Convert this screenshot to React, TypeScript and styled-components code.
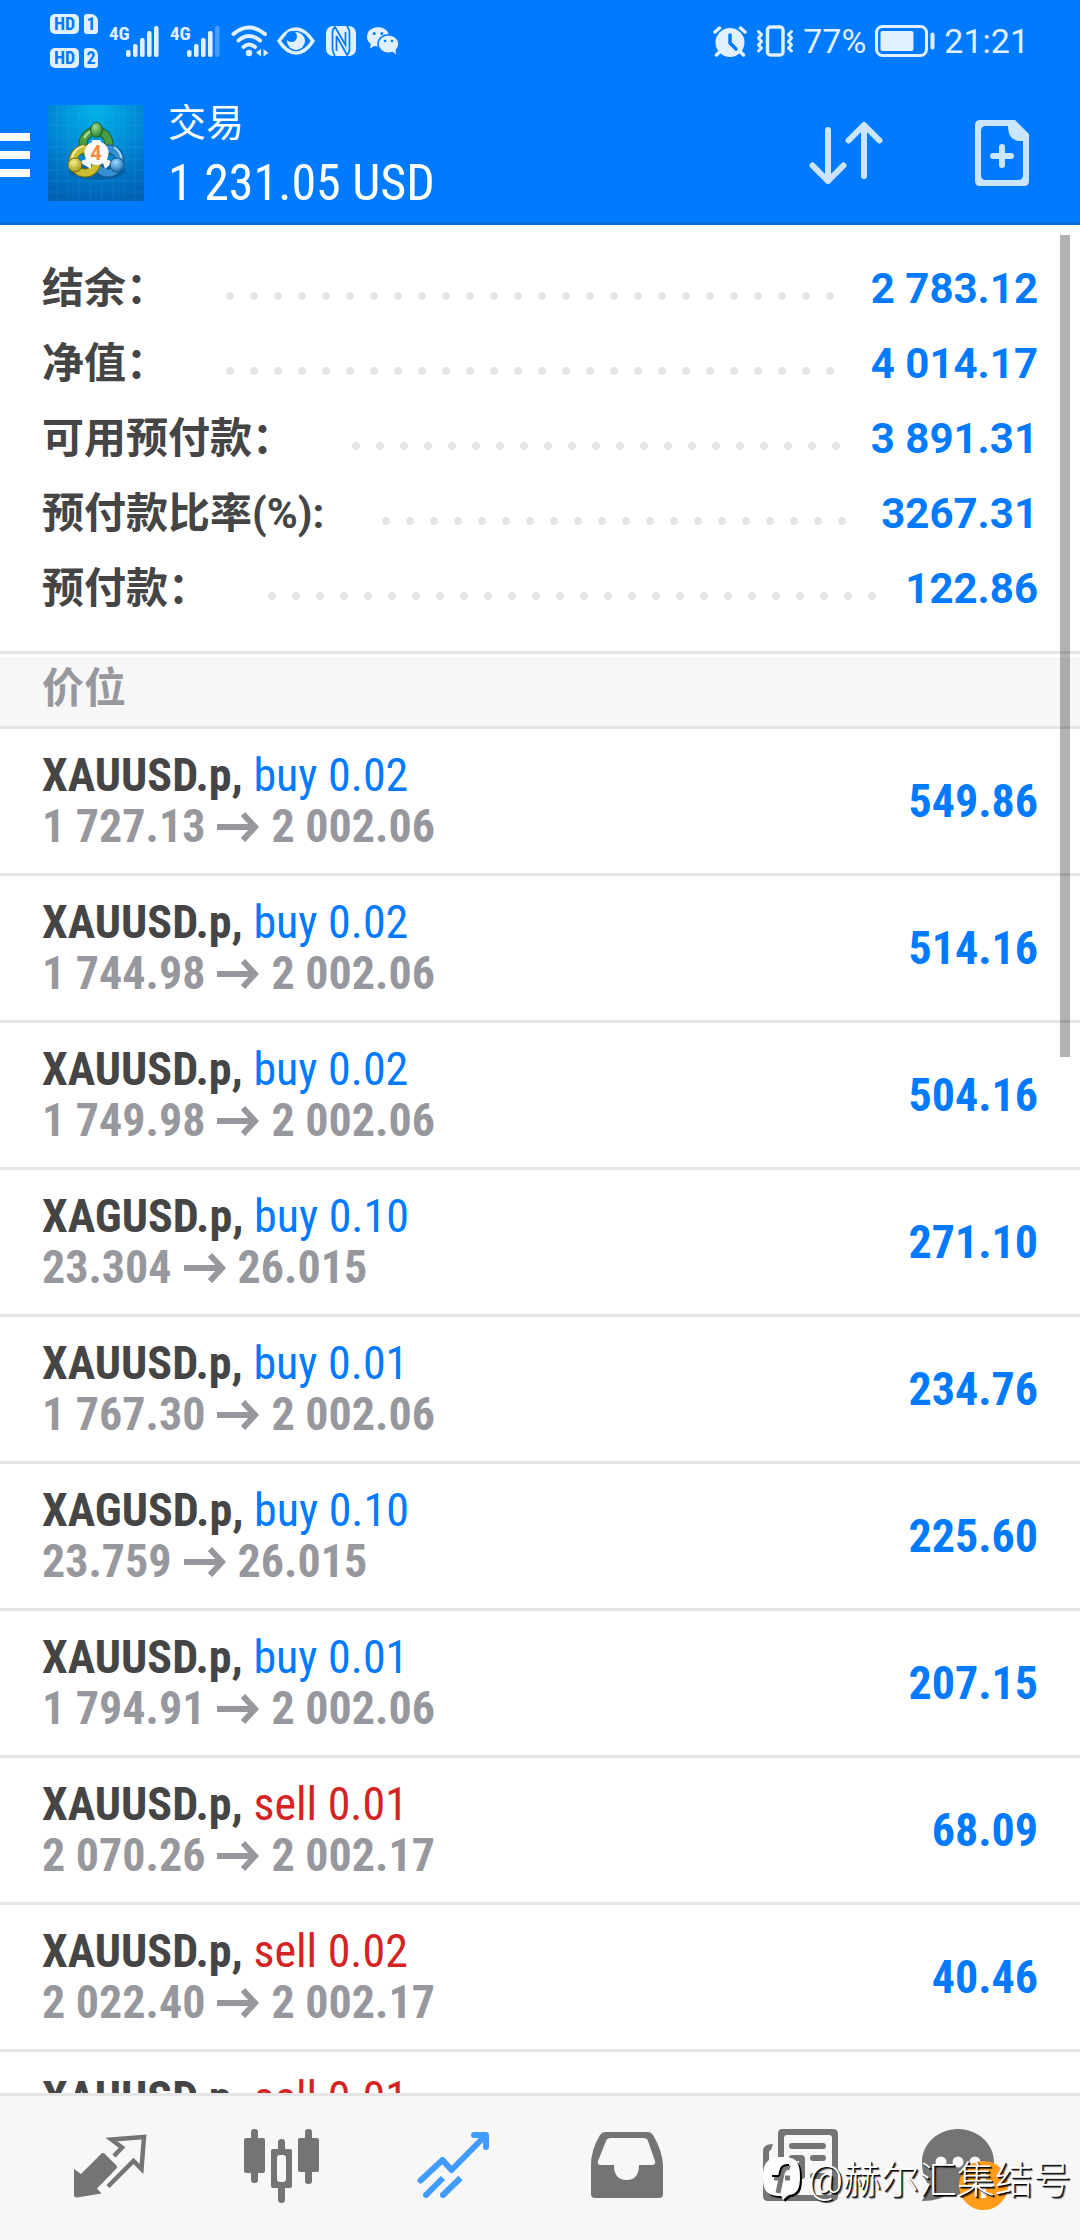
import React from "react";
import styled, { createGlobalStyle } from "styled-components";

const condensed = `"Roboto Condensed", "Liberation Sans Narrow", Roboto, "Noto Sans CJK SC", sans-serif`;
const regular = `Roboto, "Noto Sans CJK SC", sans-serif`;

const blue = "#007aff";
const red = "#d32323";
const ink = "#454545";
const muted = "#97989d";
const rule = "#e5e5e5";
const panel = "#f7f7f7";
const iconGray = "#747474";
const statusTint = "#e0f0ff";

const GlobalStyle = createGlobalStyle`
  * { box-sizing: border-box; }
  body { margin: 0; background: #fff; }
  button { border: 0; padding: 0; background: none; font: inherit; color: inherit; cursor: pointer; }
  svg { display: block; flex: none; }
`;

const Screen = styled.div`
  position: relative;
  display: flex;
  flex-direction: column;
  height: 100vh;
  overflow: hidden;
  font-family: ${condensed};
`;

const Header = styled.header`
  flex: none;
  background: ${blue};
  color: #fff;
  border-bottom: 3px solid #0c6bd3;
`;

const StatusBar = styled.div`
  display: flex;
  align-items: center;
  justify-content: space-between;
  height: 84px;
  padding: 0 51px 2px 50px;
  color: ${statusTint};
`;

const StatusGroup = styled.div<{ $gap: number }>`
  display: flex;
  align-items: center;
  gap: ${(p) => p.$gap}px;
`;

const SimStack = styled.div`
  display: grid;
  grid-template-columns: 29px 14px;
  gap: 14px 5px;
`;

const SimTag = styled.span<{ $card?: boolean }>`
  height: 20px;
  border-radius: ${(p) => (p.$card ? "3px 7px 3px 3px" : "5px")};
  background: ${statusTint};
  color: ${blue};
  font: 700 18px/20px ${condensed};
  text-align: center;
`;

const Signal = styled.div`
  display: flex;
  align-items: flex-start;
`;

const SignalLabel = styled.span`
  width: 17px;
  font: 700 19px/16px ${condensed};
`;

const StatusText = styled.span`
  font: 400 34px/40px ${regular};
`;

const Toolbar = styled.div`
  display: flex;
  align-items: center;
  height: 138px;
  padding-right: 51px;
`;

const MenuButton = styled.button`
  display: flex;
  flex-direction: column;
  gap: 10px;
  width: 30px;
  padding-top: 4px;
  margin-right: 18px;
`;

const MenuBar = styled.span`
  height: 8px;
  background: #fff;
`;

const TitleBlock = styled.div`
  flex: 1;
  margin-left: 24px;
`;

const Title = styled.h1`
  margin: 0;
  font: 400 38px/60px ${regular};
`;

const Profit = styled.p`
  margin: 0;
  font: 400 50px/60px ${condensed};
`;

const ToolButton = styled.button`
  margin-left: 92px;
`;

const Content = styled.main`
  position: relative;
  flex: 1;
  min-height: 0;
  overflow: hidden;
`;

const ScrollThumb = styled.div`
  position: absolute;
  top: 10px;
  right: 10px;
  width: 10px;
  height: 44%;
  background: rgba(0, 0, 0, 0.3);
`;

const Summary = styled.dl`
  margin: 0;
  padding: 26px 42px 25px;
`;

const SummaryRow = styled.div`
  display: flex;
  align-items: center;
  height: 75px;
`;

const SummaryLabel = styled.dt`
  color: ${ink};
  font: 700 42px/60px ${regular};
  white-space: nowrap;
`;

const Leader = styled.span`
  flex: 1;
  height: 8px;
  margin: 14px 24px 0 58px;
  background: radial-gradient(circle at 4px 4px, ${rule} 4px, transparent 4px) 0 0 / 24px 8px repeat-x;
`;

const SummaryValue = styled.dd`
  margin: 0;
  color: ${blue};
  font: 700 42px/60px ${regular};
`;

const SectionTitle = styled.h2`
  margin: 0;
  padding: 0 42px 3px;
  border-top: 3px solid ${rule};
  border-bottom: 3px solid ${rule};
  box-shadow: inset 0 3px #fff;
  background: ${panel};
  color: ${muted};
  font: 700 42px/69px ${regular};
`;

const Positions = styled.ul`
  margin: 0;
  padding: 0;
  list-style: none;
`;

const Position = styled.li`
  display: flex;
  align-items: center;
  justify-content: space-between;
  height: 147px;
  padding: 0 42px;
  border-bottom: 3px solid ${rule};
  font-size: 46px;
  line-height: 51px;
  font-weight: 700;
`;

const Order = styled.div`
  color: ${ink};
`;

const Side = styled.span<{ $side: "buy" | "sell" }>`
  color: ${(p) => (p.$side === "buy" ? blue : red)};
  font-weight: 400;
`;

const Prices = styled.div`
  display: flex;
  align-items: center;
  gap: 12px;
  color: ${muted};
`;

const PositionProfit = styled.span`
  color: ${blue};
`;

const TabBar = styled.nav`
  flex: none;
  display: grid;
  grid-template-columns: repeat(6, 1fr);
  height: 147px;
  padding: 0 24px;
  border-top: 3px solid ${rule};
  background: ${panel};
`;

const Tab = styled.button<{ $active?: boolean }>`
  display: flex;
  align-items: center;
  justify-content: center;
  color: ${(p) => (p.$active ? "#429bff" : iconGray)};
`;

const Watermark = styled.div`
  position: absolute;
  right: 9px;
  bottom: 32px;
  display: flex;
  align-items: center;
  gap: 5px;
  color: #fff;
  font: 300 38px/56px ${regular};
  text-shadow: 1px 1px 0 #000, 2px 2px 1px rgba(0, 0, 0, 0.7);
  pointer-events: none;
`;

function SignalBars({ weak }: { weak?: boolean }) {
  const tops = [24, 18, 12, 5, 0];
  return (
    <svg width="33" height="31" viewBox="0 0 33 31" fill="currentColor">
      {tops.map((top, i) => (
        <rect key={top} x={i * 7} y={top} width="4.6" height={31 - top} rx="2" opacity={weak && i === 4 ? 0.3 : 1} />
      ))}
    </svg>
  );
}

function WifiIcon() {
  return (
    <svg width="38" height="32" viewBox="0 0 38 32" fill="none" stroke="currentColor" strokeWidth="4" strokeLinecap="round">
      <path d="M2.500 9Q18 -4 34 9" />
      <path d="M7.500 15.500Q18 6.500 29 15.500" />
      <path d="M12.500 22Q18 17 24 22" />
      <circle cx="18" cy="28" r="3.200" fill="currentColor" stroke="none" />
      <path d="M30 24v7.500l-5-4zM32.500 31.500v-7.500l5 4z" fill="currentColor" stroke="none" />
    </svg>
  );
}

function EyeIcon() {
  return (
    <svg width="38" height="28" viewBox="0 0 38 28">
      <path d="M2 14Q10 2 19 2T36 14Q28 26 19 26T2 14Z" fill="none" stroke="currentColor" strokeWidth="3.500" strokeLinejoin="round" />
      <circle cx="19" cy="14" r="9" fill="currentColor" />
      <circle cx="14.500" cy="9.500" r="5.500" fill={blue} />
    </svg>
  );
}

function NfcIcon() {
  return (
    <svg width="30" height="30" viewBox="0 0 30 30">
      <rect width="30" height="30" rx="7" fill="currentColor" />
      <path d="M9 30Q6.500 27 6.500 22V7Q6.500 3 9 1L19.500 19V6M10.500 10v15M10.500 10L21 29Q23.500 27 23.500 23V8Q23.500 3 21 0" fill="none" stroke={blue} strokeWidth="1.700" />
    </svg>
  );
}

function WeChatIcon() {
  return (
    <svg width="32" height="28" viewBox="0 0 32 28">
      <path d="M4 16L3 21.500l6-3.500z" fill="currentColor" />
      <ellipse cx="11" cy="9.700" rx="11" ry="9.700" fill="currentColor" />
      <ellipse cx="21.500" cy="17" rx="10.500" ry="9.300" fill="currentColor" stroke={blue} strokeWidth="1.500" />
      <path d="M25 24l4 3.500-.5-5z" fill="currentColor" />
      <circle cx="7.200" cy="6.500" r="1.500" fill={blue} />
      <circle cx="14.800" cy="6.500" r="1.500" fill={blue} />
      <circle cx="18" cy="14" r="1.300" fill={blue} />
      <circle cx="25" cy="14" r="1.300" fill={blue} />
    </svg>
  );
}

function AlarmIcon() {
  return (
    <svg width="34" height="31" viewBox="0 0 34 31" strokeLinecap="round" strokeLinejoin="round" fill="none">
      <circle cx="17" cy="16.500" r="14.500" fill="currentColor" />
      <path d="M2 6l4.500-4M32 6l-4.500-4M6.500 26l-3 3M27.500 26l3 3" stroke="currentColor" strokeWidth="3.500" />
      <path d="M17 9v8l6 6" stroke={blue} strokeWidth="3.500" />
    </svg>
  );
}

function VibrateIcon() {
  return (
    <svg width="38" height="32" viewBox="0 0 38 32" fill="none" stroke="currentColor" strokeLinejoin="round" strokeLinecap="round">
      <rect x="11.500" y="2" width="15.500" height="28" rx="3" strokeWidth="3.500" />
      <path d="M2.500 6.500l3 3-3 3.500 3 3.500-3 3.500 3 3-3 3M35.500 6.500l-3 3 3 3.500-3 3.500 3 3.500-3 3 3 3" strokeWidth="3" />
    </svg>
  );
}

function BatteryIcon() {
  return (
    <svg width="60" height="32" viewBox="0 0 60 32">
      <rect x="1.500" y="1.500" width="50" height="29" rx="6" fill="none" stroke="currentColor" strokeWidth="3" />
      <rect x="5.500" y="6" width="33" height="20" rx="2" fill="currentColor" />
      <rect x="55.500" y="7.500" width="4" height="17" rx="2" fill="currentColor" />
    </svg>
  );
}

function AppLogo() {
  const grid = [9, 20, 31, 42, 54, 65, 76, 87];
  return (
    <svg width="96" height="96" viewBox="0 0 96 96">
      <defs>
        <radialGradient id="logoBack" cx="0.5" cy="0.08" r="0.95">
          <stop offset="0" stopColor="#00b2ea" />
          <stop offset="0.55" stopColor="#0083d2" />
          <stop offset="1" stopColor="#0060b4" />
        </radialGradient>
        <radialGradient id="logoGreen" cx="0.4" cy="0.3" r="0.7">
          <stop offset="0" stopColor="#a5dc8f" />
          <stop offset="1" stopColor="#257f2c" />
        </radialGradient>
        <radialGradient id="logoYellow" cx="0.4" cy="0.3" r="0.7">
          <stop offset="0" stopColor="#f6ef8e" />
          <stop offset="1" stopColor="#a99a17" />
        </radialGradient>
        <radialGradient id="logoBlue" cx="0.4" cy="0.3" r="0.7">
          <stop offset="0" stopColor="#9ed9fa" />
          <stop offset="1" stopColor="#1a72b8" />
        </radialGradient>
      </defs>
      <rect width="96" height="96" fill="url(#logoBack)" />
      {grid.map((at) => (
        <path key={at} d={`M${at} 0V96M0 ${at}H96`} stroke="#5cc8f2" strokeOpacity="0.14" />
      ))}
      <ellipse cx="49" cy="66" rx="29" ry="9" fill="#004a80" opacity="0.4" />
      <circle cx="48" cy="39" r="13" fill="none" stroke="#1c5f2a" strokeWidth="9" />
      <circle cx="48" cy="39" r="13" fill="none" stroke="#4a9c40" strokeWidth="7" />
      <path d="M36 33Q41 25 48 25" fill="none" stroke="#b4e3a4" strokeWidth="2" />
      <circle cx="60" cy="56" r="12" fill="none" stroke="#17548c" strokeWidth="9" />
      <circle cx="60" cy="56" r="12" fill="none" stroke="#3590d2" strokeWidth="7" />
      <path d="M66 42Q73 47 73 53" fill="none" stroke="#a9dcf8" strokeWidth="2" />
      <circle cx="37" cy="56" r="12" fill="none" stroke="#6d6a12" strokeWidth="9" />
      <circle cx="37" cy="56" r="12" fill="none" stroke="#c9bc30" strokeWidth="7" />
      <path d="M24 53Q27 42 36 41" fill="none" stroke="#f5f0a3" strokeWidth="2" />
      <path d="M31 57L43 52V64zM65 57L53 52L57 64zM43 35H53L50 44z" fill="#f4f7ef" />
      <ellipse cx="48.500" cy="25" rx="6" ry="7.500" fill="url(#logoGreen)" stroke="#1c5f2a" />
      <ellipse cx="27" cy="60" rx="7" ry="7" fill="url(#logoYellow)" stroke="#6d6a12" />
      <ellipse cx="69" cy="60" rx="7" ry="7" fill="url(#logoBlue)" stroke="#17548c" />
      <circle cx="48.500" cy="48" r="12" fill="#fbfbfb" />
      <text x="48" y="55" textAnchor="middle" fontFamily="Roboto, sans-serif" fontSize="20" fontWeight="700" fill="#f08a3c">4</text>
    </svg>
  );
}

function SortIcon() {
  return (
    <svg width="74" height="64" viewBox="0 0 74 64" fill="none" stroke="#cce5ff" strokeWidth="6" strokeLinecap="round" strokeLinejoin="round">
      <path d="M19 9V60M3.500 44.500L19 60L34.500 44.500" />
      <path d="M55 55V4M39.500 19.500L55 4L70.500 19.500" />
    </svg>
  );
}

function NewOrderIcon() {
  return (
    <svg width="54" height="66" viewBox="0 0 54 66" fill="#cce5ff">
      <path fillRule="evenodd" d="M5 0H40L54 14V61Q54 66 49 66H5Q0 66 0 61V5Q0 0 5 0ZM11 6Q6 6 6 11V55Q6 60 11 60H43Q48 60 48 55V21H44Q33 20 33 6Z" />
      <path d="M27 27V45M18 36H36" stroke="#cce5ff" strokeWidth="6" strokeLinecap="round" />
    </svg>
  );
}

function ArrowRight() {
  return (
    <svg width="42" height="30" viewBox="0 0 42 30" fill="none" stroke="currentColor" strokeWidth="6">
      <path d="M0 15H38M26 2L38 15L26 28" />
    </svg>
  );
}

const TabSvg = ({ children }: { children: React.ReactNode }) => (
  <svg width="100" height="100" viewBox="0 0 100 100" fill="currentColor">
    {children}
  </svg>
);

function QuotesIcon() {
  return (
    <TabSvg>
      <path d="M14 51L21 56L41 36Q43 34 45 36L56 47Q58 49 56 51L37 70.500L41.500 75.500L17 79.500Q14 80 14 77Z" />
      <path d="M54 38L62 29.500L51.500 21.500L84 19L81.500 51L73.500 43L48 68.500" fill="none" stroke="currentColor" strokeWidth="4.500" />
    </TabSvg>
  );
}

function ChartsIcon() {
  return (
    <TabSvg>
      <rect x="12" y="20" width="21" height="35" rx="2" />
      <rect x="19" y="11" width="7" height="54" rx="3" />
      <rect x="66" y="20" width="21" height="34" rx="2" />
      <rect x="73" y="11" width="7" height="55" rx="3" />
      <path fillRule="evenodd" d="M41 31H58Q60 31 60 33V68Q60 70 58 70H41Q39 70 39 68V33Q39 31 41 31ZM48 37Q45 37 45 40V61Q45 64 48 64H51Q54 64 54 61V40Q54 37 51 37Z" />
      <path d="M46 33V24Q46 21 49.500 21T53 24V33ZM46 68V82Q46 85 49.500 85T53 82V68Z" />
    </TabSvg>
  );
}

function TradeIcon() {
  return (
    <TabSvg>
      <g fill="none" stroke="currentColor" strokeWidth="6" strokeLinejoin="round">
        <path d="M16.500 62.500L38.500 42L47.500 52L81 18M70 17H82V29" strokeLinecap="round" />
        <path d="M39 60L22 77M56.500 60L39 77" />
      </g>
      <circle cx="22" cy="77" r="3" />
      <circle cx="39" cy="77" r="3" />
    </TabSvg>
  );
}

function HistoryIcon() {
  return (
    <TabSvg>
      <path fillRule="evenodd" d="M29 14H72Q75 14 77 17Q86 32 87 47V76Q87 80 83 80H19Q15 80 15 76V47Q15 32 24 17Q26 14 29 14ZM35 20Q31 20 30 23L22 43Q21 47 25 47H38Q38 62 50.500 62T63 47H76Q80 47 79 43L72 23Q71 20 67 20Z" />
    </TabSvg>
  );
}

function NewsIcon() {
  return (
    <TabSvg>
      <path fillRule="evenodd" d="M34 11H85Q90 11 90 16V78Q90 83 85 83H20Q15 83 15 78V33Q15 26 25 26L23 32Q21 32 21 35V72Q21 77 25 77Q30 77 30 72V16Q30 11 34 11ZM39 17Q36 17 36 20V74Q36 77 39 77H81Q84 77 84 74V20Q84 17 81 17Z" />
      <rect x="41" y="25" width="37" height="6" rx="3" />
      <path d="M44 37H53Q57 37 57 41V58Q57 61 54 61H44Q41 61 41 58V40Q41 37 44 37Z" />
      <rect x="47" y="43" width="4" height="12" fill={panel} />
      <rect x="62" y="37" width="16" height="6" rx="3" />
      <rect x="62" y="55" width="16" height="6" rx="3" />
    </TabSvg>
  );
}

function ChatIcon() {
  return (
    <TabSvg>
      <path d="M38 11C58 11 74 26 74 44S58 77 38 77Q32 77 27 76Q20 83 3 83Q1 83 3 81Q8 76 8 66Q2 58 2 44C2 26 18 11 38 11Z" />
      <circle cx="21" cy="44" r="5.500" fill={panel} />
      <circle cx="38" cy="44" r="5.500" fill={panel} />
      <circle cx="55" cy="44" r="5.500" fill={panel} />
      <circle cx="63.500" cy="67.500" r="24.500" fill="#ff9c1a" />
      <path d="M63.500 54V80M53 67H74" stroke="#fff" strokeWidth="5" />
    </TabSvg>
  );
}

function WatermarkLogo() {
  const bubble = "M20 0C34 0 37 6 37 20C37 32 34 37 26 38Q24 39 20 43Q19 40 18 39C4 39 0 34 0 20C0 5 5 0 20 0Z";
  return (
    <svg width="40" height="46" viewBox="0 0 40 46">
      <path d={bubble} fill="#000" transform="translate(2 2)" />
      <path d={bubble} fill="#fff" />
      <path d="M27 11Q21 9 19 17L15 36M11 21H17M22 21H27" fill="none" stroke="#777" strokeWidth="5" />
      <path d="M26 8Q18 7 17 15L16 19M9 19H16" fill="none" stroke="#000" strokeWidth="2" />
    </svg>
  );
}

const summary = [
  { label: "结余：", value: "2 783.12" },
  { label: "净值：", value: "4 014.17" },
  { label: "可用预付款：", value: "3 891.31" },
  { label: "预付款比率(%):", value: "3267.31" },
  { label: "预付款：", value: "122.86" },
];

type PositionData = {
  symbol: string;
  side: "buy" | "sell";
  volume: string;
  open: string;
  current: string;
  profit: string;
};

const positions: PositionData[] = [
  { symbol: "XAUUSD.p", side: "buy", volume: "0.02", open: "1 727.13", current: "2 002.06", profit: "549.86" },
  { symbol: "XAUUSD.p", side: "buy", volume: "0.02", open: "1 744.98", current: "2 002.06", profit: "514.16" },
  { symbol: "XAUUSD.p", side: "buy", volume: "0.02", open: "1 749.98", current: "2 002.06", profit: "504.16" },
  { symbol: "XAGUSD.p", side: "buy", volume: "0.10", open: "23.304", current: "26.015", profit: "271.10" },
  { symbol: "XAUUSD.p", side: "buy", volume: "0.01", open: "1 767.30", current: "2 002.06", profit: "234.76" },
  { symbol: "XAGUSD.p", side: "buy", volume: "0.10", open: "23.759", current: "26.015", profit: "225.60" },
  { symbol: "XAUUSD.p", side: "buy", volume: "0.01", open: "1 794.91", current: "2 002.06", profit: "207.15" },
  { symbol: "XAUUSD.p", side: "sell", volume: "0.01", open: "2 070.26", current: "2 002.17", profit: "68.09" },
  { symbol: "XAUUSD.p", side: "sell", volume: "0.02", open: "2 022.40", current: "2 002.17", profit: "40.46" },
];

function PositionRow({ symbol, side, volume, open, current, profit }: PositionData) {
  return (
    <Position>
      <div>
        <Order>
          {symbol}, <Side $side={side}>{`${side} ${volume}`}</Side>
        </Order>
        <Prices>
          {open}
          <ArrowRight />
          {current}
        </Prices>
      </div>
      <PositionProfit>{profit}</PositionProfit>
    </Position>
  );
}

export default function App() {
  return (
    <Screen lang="zh-CN">
      <GlobalStyle />
      <Header>
        <StatusBar>
          <StatusGroup $gap={11}>
            <SimStack>
              <SimTag>HD</SimTag>
              <SimTag $card>1</SimTag>
              <SimTag>HD</SimTag>
              <SimTag $card>2</SimTag>
            </SimStack>
            <Signal>
              <SignalLabel>4G</SignalLabel>
              <SignalBars />
            </Signal>
            <Signal>
              <SignalLabel>4G</SignalLabel>
              <SignalBars weak />
            </Signal>
            <StatusGroup $gap={8}>
              <WifiIcon />
              <EyeIcon />
            </StatusGroup>
            <NfcIcon />
            <WeChatIcon />
          </StatusGroup>
          <StatusGroup $gap={9}>
            <AlarmIcon />
            <VibrateIcon />
            <StatusText>77%</StatusText>
            <BatteryIcon />
            <StatusText>21:21</StatusText>
          </StatusGroup>
        </StatusBar>
        <Toolbar>
          <MenuButton aria-label="菜单">
            <MenuBar />
            <MenuBar />
            <MenuBar />
          </MenuButton>
          <AppLogo />
          <TitleBlock>
            <Title>交易</Title>
            <Profit>1 231.05 USD</Profit>
          </TitleBlock>
          <ToolButton aria-label="排序">
            <SortIcon />
          </ToolButton>
          <ToolButton aria-label="新订单">
            <NewOrderIcon />
          </ToolButton>
        </Toolbar>
      </Header>
      <Content>
        <Summary>
          {summary.map((row) => (
            <SummaryRow key={row.label}>
              <SummaryLabel>{row.label}</SummaryLabel>
              <Leader />
              <SummaryValue>{row.value}</SummaryValue>
            </SummaryRow>
          ))}
        </Summary>
        <SectionTitle>价位</SectionTitle>
        <Positions>
          {positions.map((p) => (
            <PositionRow key={p.open} {...p} />
          ))}
          <Position>
            <Order>
              XAUUSD.p, <Side $side="sell">sell 0.01</Side>
              <br />
              &nbsp;
            </Order>
          </Position>
        </Positions>
        <ScrollThumb />
      </Content>
      <TabBar>
        <Tab aria-label="行情">
          <QuotesIcon />
        </Tab>
        <Tab aria-label="图表">
          <ChartsIcon />
        </Tab>
        <Tab aria-label="交易" $active>
          <TradeIcon />
        </Tab>
        <Tab aria-label="历史">
          <HistoryIcon />
        </Tab>
        <Tab aria-label="新闻">
          <NewsIcon />
        </Tab>
        <Tab aria-label="消息">
          <ChatIcon />
        </Tab>
      </TabBar>
      <Watermark>
        <WatermarkLogo />
        <span>@赫尔汇集结号</span>
      </Watermark>
    </Screen>
  );
}
